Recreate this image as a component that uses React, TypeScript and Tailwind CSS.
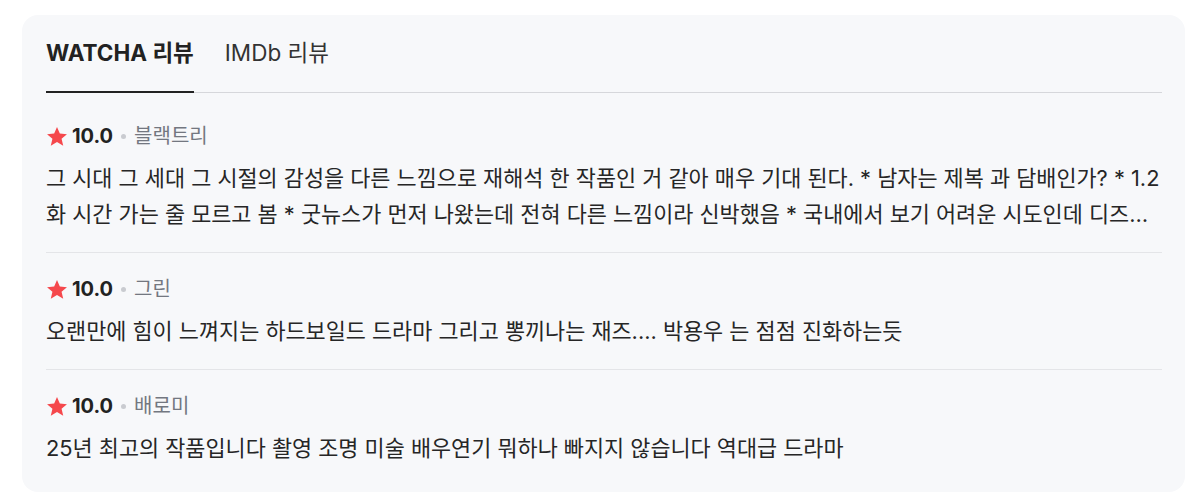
import React from "react";

const reviews = [
  {
    score: "10.0",
    name: "블랙트리",
    text: "그 시대 그 세대 그 시절의 감성을 다른 느낌으로 재해석 한 작품인 거 같아 매우 기대 된다. * 남자는 제복 과 담배인가? * 1.2화 시간 가는 줄 모르고 봄 * 굿뉴스가 먼저 나왔는데 전혀 다른 느낌이라 신박했음 * 국내에서 보기 어려운 시도인데 디즈니플러스에서 이런 작품을 볼 수 있어서 좋았다 * 배우들 연기도 좋고 음악도 좋았음",
  },
  {
    score: "10.0",
    name: "그린",
    text: "오랜만에 힘이 느껴지는 하드보일드 드라마 그리고 뽕끼나는 재즈.... 박용우 는 점점 진화하는듯",
  },
  {
    score: "10.0",
    name: "배로미",
    text: "25년 최고의 작품입니다 촬영 조명 미술 배우연기 뭐하나 빠지지 않습니다 역대급 드라마",
  },
];

function Star() {
  return (
    <svg width="22" height="21" viewBox="0 0 24 23" className="shrink-0">
      <path
        d="M12 1l3.1 7.2 7.8.7-5.9 5.1 1.8 7.6L12 17.6l-6.8 4 1.8-7.6-5.9-5.1 7.8-.7L12 1z"
        fill="#f5484c"
      />
    </svg>
  );
}

export default function App() {
  return (
    <div
      className="bg-white pl-[22px] pr-[11px] pt-[15px] pb-[12px]"
      style={{ fontFamily: 'Inter, "Noto Sans CJK KR", sans-serif' }}
    >
      <div className="rounded-[16px] bg-[#f7f8fa] pl-6 pr-[23px] pt-[23px] pb-[6px] text-[#222222]">
        <div className="flex gap-[31px] border-b border-[#d6d7db]">
          <div className="relative pb-[24px] text-[22.5px] leading-[30px] font-bold">
            WATCHA 리뷰
            <div className="absolute left-0 right-0 bottom-[-1px] h-[2px] bg-[#222222]" />
          </div>
          <div className="pb-[24px] text-[22.5px] leading-[30px] text-[#333333]">IMDb 리뷰</div>
        </div>
        <div className="pt-[7px]">
          {reviews.map((r, i) => (
            <div
              key={i}
              className={
                "flex flex-col gap-[10px] pt-[22px] pb-[20px] " +
                (i < reviews.length - 1 ? "border-b border-[#e4e5e8]" : "")
              }
            >
              <div className="flex items-center text-[20px] leading-[28px]">
                <Star />
                <span className="ml-[4px] font-bold text-[#222222]">{r.score}</span>
                <span className="mx-[8px] h-[5px] w-[5px] rounded-full bg-[#c9cbd0]" />
                <span className="text-[#737780]">{r.name}</span>
              </div>
              <p className="line-clamp-2 text-[21.85px] leading-[36px] text-[#262626]">{r.text}</p>
            </div>
          ))}
        </div>
      </div>
    </div>
  );
}
